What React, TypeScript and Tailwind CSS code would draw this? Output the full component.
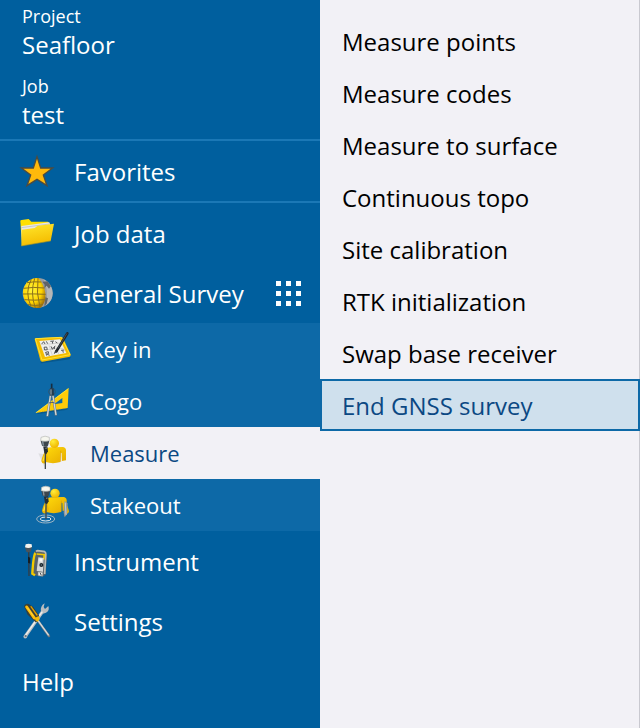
import type { ReactNode } from "react";

function FavoritesIcon() {
  return (
    <svg className="h-10 w-10 shrink-0" viewBox="21 3 120 120" aria-hidden="true">
      <path
        d="M81 20 L92 54 L128 54 L100 75 L111 107 L81 88 L51 107 L62 75 L34 54 L70 54 Z"
        fill="#ffb90b"
        stroke="#4d4b40"
        strokeWidth="4"
      />
    </svg>
  );
}

function FolderIcon() {
  return (
    <svg className="h-10 w-10 shrink-0" viewBox="21 9 120 120" aria-hidden="true">
      <defs>
        <linearGradient id="folder" x1="0" y1="0" x2="0.3" y2="1">
          <stop offset="0" stopColor="#ffe92e" />
          <stop offset="1" stopColor="#f5bc00" />
        </linearGradient>
      </defs>
      <path d="M31 33 Q31 30 35 30 L56 27 L64 35 L114 35 L119 41 L119 90 L36 107 Z" fill="#ffe000" />
      <path d="M34 48 L118 37 L121 46 L119 84 L36 100 Z" fill="#e8e8e6" />
      <path d="M34 53 L118 42" stroke="#b9b9b0" strokeWidth="2" />
      <path d="M36 59 L74 54 L83 47 L132 41 L122 93 L34 108 Z" fill="url(#folder)" />
      <path d="M34 108 L122 93" stroke="#8d8a36" strokeWidth="2" />
    </svg>
  );
}

function GlobeIcon() {
  return (
    <svg className="h-10 w-10 shrink-0" viewBox="21 9 120 120" aria-hidden="true">
      <defs>
        <radialGradient id="globe" cx="0.4" cy="0.4" r="0.65">
          <stop offset="0" stopColor="#fff43a" />
          <stop offset="0.65" stopColor="#ffd400" />
          <stop offset="1" stopColor="#a87708" />
        </radialGradient>
      </defs>
      <circle cx="83" cy="69" r="45" fill="#9a9c9e" />
      <path d="M101 28 Q127 42 128 70 Q127 95 108 106 Q117 62 101 28 Z" fill="#b5b6b7" />
      <path d="M97 35 L112 34 L123 48 L117 56 L110 47 L103 54 L104 44 Z M106 82 L114 85 L110 101 L103 108 Z" fill="#606468" />
      <path d="M86 24 Q109 53 106 84 Q104 102 92 113 Q60 120 44 91 Q31 61 51 37 Q66 23 86 24 Z" fill="url(#globe)" />
      <g fill="none" stroke="#8a701c" strokeWidth="3">
        <path d="M40 55 Q70 50 104 54 M39 72 Q70 71 107 73 M43 89 Q72 92 104 89 M51 38 Q72 34 94 36 M54 104 Q75 109 99 104" />
        <path d="M64 28 Q43 66 63 109 M74 25 Q60 69 76 114 M84 24 Q78 69 90 113" />
      </g>
    </svg>
  );
}

function KeyInIcon() {
  return (
    <svg className="h-10 w-10 shrink-0" viewBox="21 12 120 120" aria-hidden="true">
      <path d="M46 111 L138 96 L134 103 L49 115 Z" fill="#07588e" />
      <path d="M29 43 Q29 40 34 40 L108 36 Q112 36 114 39 L137 88 Q138 94 134 95 L53 110 Q48 111 46 106 Z" fill="#f3bc00" />
      <path d="M31 41 L109 37 L135 89 L51 105 Z" fill="none" stroke="#ffe233" strokeWidth="3" />
      <path d="M43 48 L105 43 L124 84 L60 96 Z" fill="#efefed" />
      <path d="M47 59 L109 54 M54 75 L116 70 M72 61 L82 91 M91 60 L101 87" stroke="#c4c4c2" strokeWidth="2" />
      <g fill="none" stroke="#5a5c5f" strokeWidth="3">
        <path d="M50 57 L56 50 L60 57 M64 49 L68 56 M76 49 L87 48 M82 49 L83 56 M91 50 L97 54" />
        <path d="M57 67 L65 66 L67 74 L59 75 Z M78 64 L82 73 L85 67 L88 72 L89 63 M62 81 L65 92 M62 82 L70 80 L71 86 L65 87 L74 91 M108 76 L118 75 M113 76 L115 83" />
      </g>
      <path d="M127 25 L94 79" stroke="#1f252b" strokeWidth="8" strokeLinecap="round" />
      <path d="M126 25 L99 70" stroke="#5a646d" strokeWidth="2" />
      <path d="M91 75 L98 79 L86 88 Z" fill="#37393b" />
    </svg>
  );
}

function CogoIcon() {
  return (
    <svg className="h-10 w-10 shrink-0" viewBox="21 9 120 120" aria-hidden="true">
      <path d="M33 104 L128 91 L127 95 L40 108 Z" fill="#07588e" />
      <path fillRule="evenodd" d="M131 30 L128 90 L31 105 Z M112 60 L112 75 L87 79 Z" fill="#ffcc08" />
      <path d="M130 32 L33 104" stroke="#fff04c" strokeWidth="2" />
      <path d="M44 102 L123 91" stroke="#bc8a00" strokeWidth="2" strokeDasharray="2 5" />
      <circle cx="81" cy="41" r="10" fill="none" stroke="#31536e" strokeWidth="3" />
      <path d="M80 17 L80 31" stroke="#172d40" strokeWidth="5" />
      <path d="M75 31 L86 31 L87 53 L75 53 Z" fill="#253c4e" />
      <path d="M78 34 L78 50" stroke="#a5b2bd" strokeWidth="3" />
      <path d="M77 52 L67 116 M84 52 L93 113" stroke="#6b777e" strokeWidth="7" />
      <path d="M76 54 L67 114 M84 54 L93 111" stroke="#d3d7d8" strokeWidth="4" />
      <path d="M72 75 Q81 71 89 75" stroke="#54616a" strokeWidth="3" fill="none" />
    </svg>
  );
}

function Surveyor() {
  return (
    <>
      <path d="M61 68 Q64 58 78 58 L113 57 Q122 58 123 66 L123 97 L111 99 L110 75 L107 74 L106 102 Q84 109 62 102 Z" fill="url(#person)" />
      <circle cx="88" cy="46" r="14" fill="url(#head)" />
      <path d="M107 68 L107 101" stroke="#d99f00" strokeWidth="2" />
      <path d="M62 69 Q53 78 49 99 Q51 109 61 106 L70 94 Z" fill="#edb700" />
      <path d="M61 77 L54 99" stroke="#ffe13d" strokeWidth="4" />
      <path d="M61 70 L61 123" stroke="#40464a" strokeWidth="4" />
      <path d="M47 38 L73 38 L69 53 Q60 59 51 53 Z" fill="#3d464d" />
      <path d="M53 40 L55 53" stroke="#8797a2" strokeWidth="4" />
      <path d="M55 57 L67 55 L69 70 L64 79 L58 75 Z" fill="#262e34" />
      <path d="M61 61 L66 60" stroke="#b4bac0" strokeWidth="2" />
      <path d="M48 28 Q60 21 73 28 L73 38 Q60 42 47 38 Z" fill="#f6f6ee" stroke="#b3b7b4" strokeWidth="2" />
    </>
  );
}

function MeasureIcon() {
  return (
    <svg className="h-10 w-10 shrink-0" viewBox="21 15 120 120" aria-hidden="true">
      <defs>
        <linearGradient id="person" x1="0" y1="0" x2="1" y2="1">
          <stop offset="0" stopColor="#ffda0b" />
          <stop offset="1" stopColor="#e6aa00" />
        </linearGradient>
        <radialGradient id="head" cx="0.35" cy="0.3" r="0.7">
          <stop offset="0" stopColor="#ffed3b" />
          <stop offset="1" stopColor="#f0b600" />
        </radialGradient>
      </defs>
      <path d="M40 76 L57 79 L58 118 Z" fill="#dfdfe3" />
      <Surveyor />
    </svg>
  );
}

function StakeoutIcon() {
  return (
    <svg className="h-10 w-10 shrink-0" viewBox="21 15 120 120" aria-hidden="true">
      <g fill="none">
        <ellipse cx="62" cy="117" rx="27" ry="12" stroke="#9fb5c4" strokeWidth="3" />
        <ellipse cx="62" cy="117" rx="16" ry="6" stroke="#e6edf1" strokeWidth="3" />
      </g>
      <g transform="translate(2 -6)">
        <Surveyor />
      </g>
      <path d="M121 66 Q131 82 132 96 L119 109 Z" fill="#e9b500" />
      <path d="M119 63 L128 70 L126 103 L119 112 L116 98 Z" fill="#92989c" />
      <path d="M121 68 L123 104" stroke="#c9ced1" strokeWidth="3" />
    </svg>
  );
}

function InstrumentIcon() {
  return (
    <svg className="h-10 w-10 shrink-0" viewBox="21 18 120 120" aria-hidden="true">
      <path d="M56 46 L57 123" stroke="#343d44" strokeWidth="4" />
      <path d="M45 36 L66 36 L62 50 Q56 54 49 50 Z" fill="#4a545b" />
      <path d="M47 28 Q55 24 65 28 L66 36 Q56 41 45 37 Z" fill="#f2f3ee" />
      <path d="M54 65 L61 68 L61 86 L54 83 Z" fill="#151d23" />
      <path d="M73 51 Q76 44 83 44 L103 47 Q110 50 111 59 L107 119 L99 124 L68 121 Q63 119 64 112 Z" fill="#59636a" />
      <path d="M78 49 L83 47 L104 50 Q108 52 107 61 L104 117" fill="none" stroke="#b9bcb8" strokeWidth="5" />
      <path d="M76 54 Q70 62 67 116 L75 121" fill="none" stroke="#f2ca00" strokeWidth="7" />
      <path d="M80 57 L103 59 L101 74" fill="none" stroke="#f2ca00" strokeWidth="5" />
      <path d="M85 67 L101 69 L99 111 L80 108 Z" fill="#d4d8d9" />
      <path d="M89 70 L97 71 L96 80 L88 79 Z" fill="#f8f8f3" />
      <circle cx="94" cy="90" r="6" fill="#19242c" />
      <circle cx="94" cy="90" r="2" fill="#75858e" />
      <path d="M84 110 L99 112 L98 124 L84 122 Z" fill="#f0f0eb" stroke="#737b7f" strokeWidth="2" />
      <path d="M90 113 L94 121" stroke="#3c444b" strokeWidth="3" />
    </svg>
  );
}

function SettingsIcon() {
  return (
    <svg className="h-10 w-10 shrink-0" viewBox="21 198 120 120" aria-hidden="true">
      <path
        d="M41 302 L83 243 L93 228 Q90 214 104 205 L101 216 L105 222 L115 213 Q120 227 108 233 L99 236 L53 302 Q51 312 43 310 Q38 306 41 302 Z"
        fill="#b9bdc0"
      />
      <path d="M46 302 L97 230" stroke="#f0f0ed" strokeWidth="4" />
      <circle cx="47" cy="303" r="3" fill="#65717a" />
      <path d="M83 256 L117 303" stroke="#747a7e" strokeWidth="7" strokeLinecap="round" />
      <path d="M83 255 L116 301" stroke="#d9dcdd" strokeWidth="4" />
      <path d="M42 214 Q45 204 56 207 L70 216 L88 243 Q88 259 77 262 L53 239 Z" fill="#39403a" />
      <path d="M50 216 L73 249" stroke="#ffbd09" strokeWidth="9" strokeLinecap="round" />
      <path d="M63 215 L81 240" stroke="#e0a100" strokeWidth="4" strokeLinecap="round" />
      <path d="M53 219 L70 243" stroke="#ffe05a" strokeWidth="2" />
      <path d="M74 249 L86 243 L89 253 L83 260 L77 257 Z" fill="#f3b908" />
    </svg>
  );
}

function MenuItem({ icon, label }: { icon: ReactNode; label: string }) {
  return (
    <button
      type="button"
      className="flex h-[60px] w-full items-center gap-[17px] pl-[17px] text-left text-2xl hover:bg-[#0d69a7]"
    >
      {icon}
      <span className="pt-0.5">{label}</span>
    </button>
  );
}

function SubItem({ icon, label, active = false }: { icon: ReactNode; label: string; active?: boolean }) {
  return (
    <button
      type="button"
      aria-current={active ? "page" : undefined}
      className={`flex h-13 w-full items-center gap-[18px] pl-8 text-left text-[22px] ${
        active ? "bg-[#f2f1f6] text-[#0b4883]" : "bg-[#0d69a7]"
      }`}
    >
      {icon}
      {label}
    </button>
  );
}

const actions = [
  "Measure points",
  "Measure codes",
  "Measure to surface",
  "Continuous topo",
  "Site calibration",
  "RTK initialization",
  "Swap base receiver",
  "End GNSS survey",
];

export default function App() {
  return (
    <div className="flex min-h-screen bg-[#f2f1f6] font-['Open_Sans',sans-serif]">
      <nav className="w-1/2 bg-[#005f9e] text-white">
        <dl className="px-[22px] pt-1 pb-[7px]">
          <dt className="text-lg leading-6">Project</dt>
          <dd className="mb-3 text-2xl leading-[34px]">Seafloor</dd>
          <dt className="text-lg leading-6">Job</dt>
          <dd className="text-2xl leading-[34px]">test</dd>
        </dl>

        <div className="border-y-2 border-[#1b78b6]">
          <MenuItem icon={<FavoritesIcon />} label="Favorites" />
        </div>
        <MenuItem icon={<FolderIcon />} label="Job data" />

        <div className="flex items-center pr-[19px]">
          <MenuItem icon={<GlobeIcon />} label="General Survey" />
          <button type="button" aria-label="Switch app" className="grid shrink-0 grid-cols-3 gap-[5px]">
            {Array.from({ length: 9 }, (_, i) => (
              <span key={i} className="h-[5px] w-[5px] bg-white" />
            ))}
          </button>
        </div>

        <SubItem icon={<KeyInIcon />} label="Key in" />
        <SubItem icon={<CogoIcon />} label="Cogo" />
        <SubItem icon={<MeasureIcon />} label="Measure" active />
        <SubItem icon={<StakeoutIcon />} label="Stakeout" />

        <MenuItem icon={<InstrumentIcon />} label="Instrument" />
        <MenuItem icon={<SettingsIcon />} label="Settings" />
        <button type="button" className="h-[60px] w-full px-[22px] pt-0.5 text-left text-2xl hover:bg-[#0d69a7]">
          Help
        </button>
      </nav>

      <main className="w-1/2 border-r border-[#c9c9d0] pt-[15px]">
        <ul className="-mr-px">
          {actions.map((action) => (
            <li key={action}>
              <button
                type="button"
                className={`h-13 w-full border-2 px-5 pt-0.5 text-left text-2xl ${
                  action === "End GNSS survey"
                    ? "border-[#0d69a7] bg-[#cfe0ed] text-[#0b4883]"
                    : "border-transparent text-black"
                }`}
              >
                {action}
              </button>
            </li>
          ))}
        </ul>
      </main>
    </div>
  );
}
